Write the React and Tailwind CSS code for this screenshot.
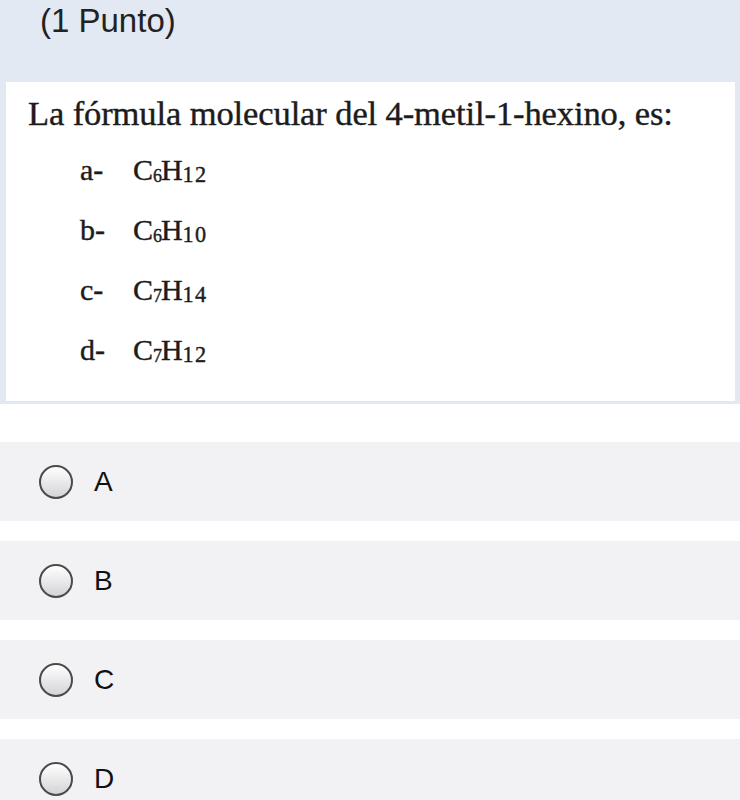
import React from 'react';

const options = [
  { key: 'a', c: '6', h: '12' },
  { key: 'b', c: '6', h: '10' },
  { key: 'c', c: '7', h: '14' },
  { key: 'd', c: '7', h: '12' },
];

const answers = ['A', 'B', 'C', 'D'];

const Formula = ({ c, h }) => (
  <span>
    C<sub className="text-[0.6em] bottom-[-0.1em] tracking-[-0.06em]">{c}</sub>H
    <sub className="text-[0.74em] bottom-[-0.08em] tracking-[0.06em]">{h}</sub>
  </span>
);

const Radio = () => (
  <span className="w-[34px] h-[34px] rounded-full border-2 border-[#4a4a4a] bg-gradient-to-b from-white to-[#d4d4d8] shrink-0" />
);

export default function App() {
  return (
    <div className="w-[740px] h-[800px] overflow-hidden bg-white">
      {/* Header */}
      <div className="bg-[#e3e9f2] pb-[3px]">
        <div className="h-[82px] pl-[40px] pt-[2px] text-[33px] leading-[38px] text-[#222] font-['Liberation_Sans',Arial,sans-serif]">
          (1 Punto)
        </div>
        <div className="ml-[6px] mr-[5px] h-[319px] bg-white pl-[22px] pt-[12px] text-[#1c1c1c] font-['Liberation_Serif','Times_New_Roman',serif] [-webkit-text-stroke:0.4px_#1c1c1c]">
          <p className="text-[34.5px] leading-[38px] tracking-[-0.003em]">
            La fórmula molecular del 4-metil-1-hexino, es:
          </p>
          <div className="pl-[52px] pt-[22px] flex flex-col text-[30px] leading-[32px]">
            {options.map((o) => (
              <div key={o.key} className="flex h-[60px] items-start">
                <span className="w-[53px]">{o.key}-</span>
                <Formula c={o.c} h={o.h} />
              </div>
            ))}
          </div>
        </div>
      </div>

      {/* Answers */}
      <div className="pt-[38px] flex flex-col gap-[20px]">
        {answers.map((a) => (
          <div key={a} className="h-[79px] bg-[#f2f1f4] flex items-center pl-[39px] gap-[21px]">
            <Radio />
            <span className="text-[28px] text-[#111] font-['Liberation_Sans',Arial,sans-serif]">{a}</span>
          </div>
        ))}
      </div>
    </div>
  );
}
